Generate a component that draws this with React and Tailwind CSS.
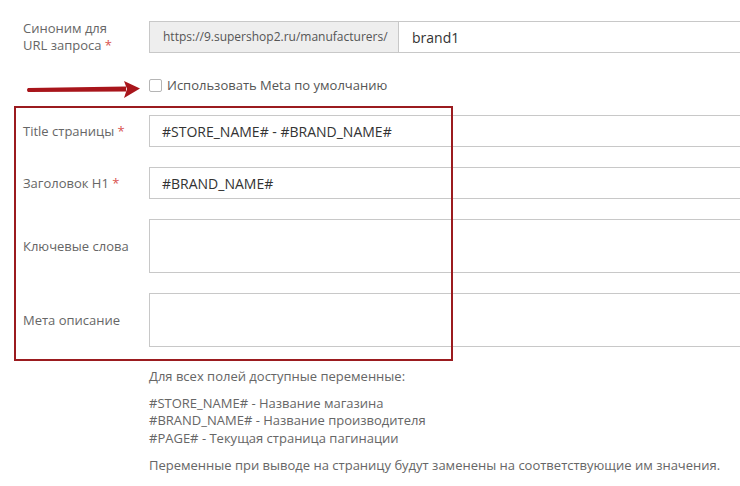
import React from "react";

const font = { fontFamily: '"Open Sans", "Noto Sans", sans-serif' };

const Req = () => <span className="text-[#d9534f]"> *</span>;

const Row = ({ label, children, className = "" }) => (
  <div className={`flex items-center ${className}`}>
    <div className="w-[126px] shrink-0 text-[13px] leading-[17px] text-[#666]">{label}</div>
    <div className="flex-1">{children}</div>
  </div>
);

const Arrow = () => (
  <svg width="116" height="20" viewBox="0 0 116 20" className="absolute left-[26px] top-[80px]">
    <path d="M2 8 Q0 10 2 12 L100 11.5 L100 6.5 Z" fill="#a8151b" />
    <path d="M98 1 L114 8.5 L98 18 L101 9 Z" fill="#a8151b" />
  </svg>
);

export default function App() {
  return (
    <div className="relative w-[740px] h-[486px] overflow-hidden bg-white" style={font}>
      <div className="pl-[23px] pt-[20px] w-[900px]">
        <Row label={<>Синоним для<br />URL запроса<Req /></>}>
          <div className="flex h-[32px] border border-[#c8c8c8]">
            <div className="w-[249px] shrink-0 bg-[#eeeeee] border-r border-[#c8c8c8] flex items-center pl-[13px] text-[12px] text-[#555]">
              https://9.supershop2.ru/manufacturers/
            </div>
            <div className="flex-1 flex items-center pl-[13px] text-[14px] text-[#333]">brand1</div>
          </div>
        </Row>

        <div className="flex items-center ml-[126px] mt-[24px] h-[15px]">
          <span className="w-[13px] h-[13px] border border-[#b5b5b5] rounded-[2px] bg-white" />
          <span className="ml-[5px] text-[13px] text-[#555]">Использовать Meta по умолчанию</span>
        </div>

        <Row label={<>Title страницы<Req /></>} className="mt-[22px]">
          <div className="h-[32px] border border-[#c8c8c8] flex items-center pl-[12px] text-[14px] text-[#333]">
            #STORE_NAME# - #BRAND_NAME#
          </div>
        </Row>

        <Row label={<>Заголовок H1<Req /></>} className="mt-[20px]">
          <div className="h-[32px] border border-[#c8c8c8] flex items-center pl-[12px] text-[14px] text-[#333]">
            #BRAND_NAME#
          </div>
        </Row>

        <Row label="Ключевые слова" className="mt-[20px]">
          <div className="h-[54px] border border-[#c8c8c8]" />
        </Row>

        <Row label="Мета описание" className="mt-[20px]">
          <div className="h-[54px] border border-[#c8c8c8]" />
        </Row>

        <div className="ml-[126px] mt-[21px] text-[13px] leading-[17.5px] text-[#666]">
          <p>Для всех полей доступные переменные:</p>
          <p className="mt-[9px]">#STORE_NAME# - Название магазина</p>
          <p>#BRAND_NAME# - Название производителя</p>
          <p>#PAGE# - Текущая страница пагинации</p>
          <p className="mt-[10px]">Переменные при выводе на страницу будут заменены на соответствующие им значения.</p>
        </div>
      </div>

      <Arrow />
      <div className="absolute left-[14px] top-[106px] w-[439px] h-[255px] border-2 border-[#9b1b1f] pointer-events-none" />
    </div>
  );
}
